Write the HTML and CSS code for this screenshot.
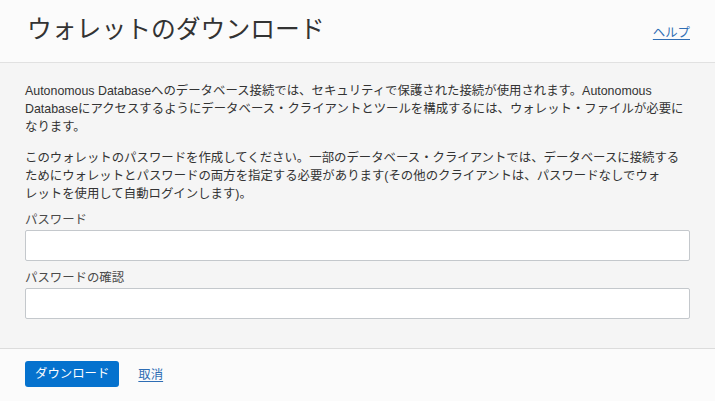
FILE: index.html
```html
<!DOCTYPE html>
<html lang="ja">
<head>
<meta charset="utf-8">
<title>ウォレットのダウンロード</title>
<link rel="stylesheet" href="styles.css">
</head>
<body>
<div class="dialog">
  <header class="dlg-header">
    <h1 class="dlg-title">ウォレットのダウンロード</h1>
    <a class="link help" href="#">ヘルプ</a>
  </header>
  <main class="dlg-body">
    <p class="para">Autonomous Databaseへのデータベース接続では、セキュリティで保護された接続が使用されます。Autonomous Databaseにアクセスするようにデータベース・クライアントとツールを構成するには、ウォレット・ファイルが必要になります。</p>
    <p class="para">このウォレットのパスワードを作成してください。一部のデータベース・クライアントでは、データベースに接続するためにウォレットとパスワードの両方を指定する必要があります(その他のクライアントは、パスワードなしでウォ<br>レットを使用して自動ログインします)。</p>
    <div class="field">
      <label class="label" for="pw">パスワード</label>
      <input class="input" id="pw" type="password">
    </div>
    <div class="field">
      <label class="label" for="pw2">パスワードの確認</label>
      <input class="input" id="pw2" type="password">
    </div>
  </main>
  <footer class="dlg-footer">
    <button class="btn-primary" type="button">ダウンロード</button>
    <a class="link" href="#">取消</a>
  </footer>
</div>
</body>
</html>
```

FILE: styles.css
```css
* { box-sizing: border-box; }
html, body { margin: 0; padding: 0; }
body {
  font-family: "Liberation Sans", "Noto Sans CJK JP", sans-serif;
  color: #333;
  background: #f5f5f5;
  width: 715px;
  height: 401px;
  overflow: hidden;
}
.dialog {
  display: flex;
  flex-direction: column;
  height: 401px;
}
.dlg-header {
  display: flex;
  align-items: center;
  justify-content: space-between;
  height: 63px;
  padding: 0 25px 0 27px;
  background: #fbfbfb;
  border-bottom: 1px solid #e1e1e1;
}
.dlg-title {
  margin: 0;
  font-size: 24.8px;
  font-weight: 400;
  color: #333;
  line-height: 30px;
  position: relative;
  top: -1px;
}
.link {
  font-size: 12.4px;
  color: #2e6db4;
  text-decoration: underline;
  text-underline-offset: 2px;
}
.help { margin-top: 2px; }
.dlg-body {
  flex: 1;
  padding: 19px 25px 0 25px;
  background: #f5f5f5;
  border-bottom: 1px solid #dcdcdc;
}
.para {
  margin: 0 0 13px 0;
  font-size: 12.4px;
  line-height: 18px;
  color: #333;
}
.para + .para { margin-bottom: 8px; }
.field {
  display: flex;
  flex-direction: column;
  margin-top: 0;
}
.field + .field { margin-top: 8px; }
.label {
  font-size: 12.4px;
  line-height: 18px;
  color: #4a4a4a;
  margin-bottom: 1px;
}
.input {
  height: 31px;
  width: 100%;
  border: 1px solid #c4c8cc;
  border-radius: 2px;
  background: #fff;
  font: inherit;
  padding: 0 6px;
}
.dlg-footer {
  display: flex;
  align-items: center;
  gap: 19px;
  height: 52px;
  padding: 0 25px 2px 25px;
  background: #fbfbfb;
  flex: none;
}
.btn-primary {
  height: 26px;
  padding: 0 10px;
  border: none;
  border-radius: 3px;
  background: #0572ce;
  color: #fff;
  font-family: "Liberation Sans", "Noto Sans CJK JP", sans-serif;
  font-size: 12.4px;
  line-height: 26px;
}
```
